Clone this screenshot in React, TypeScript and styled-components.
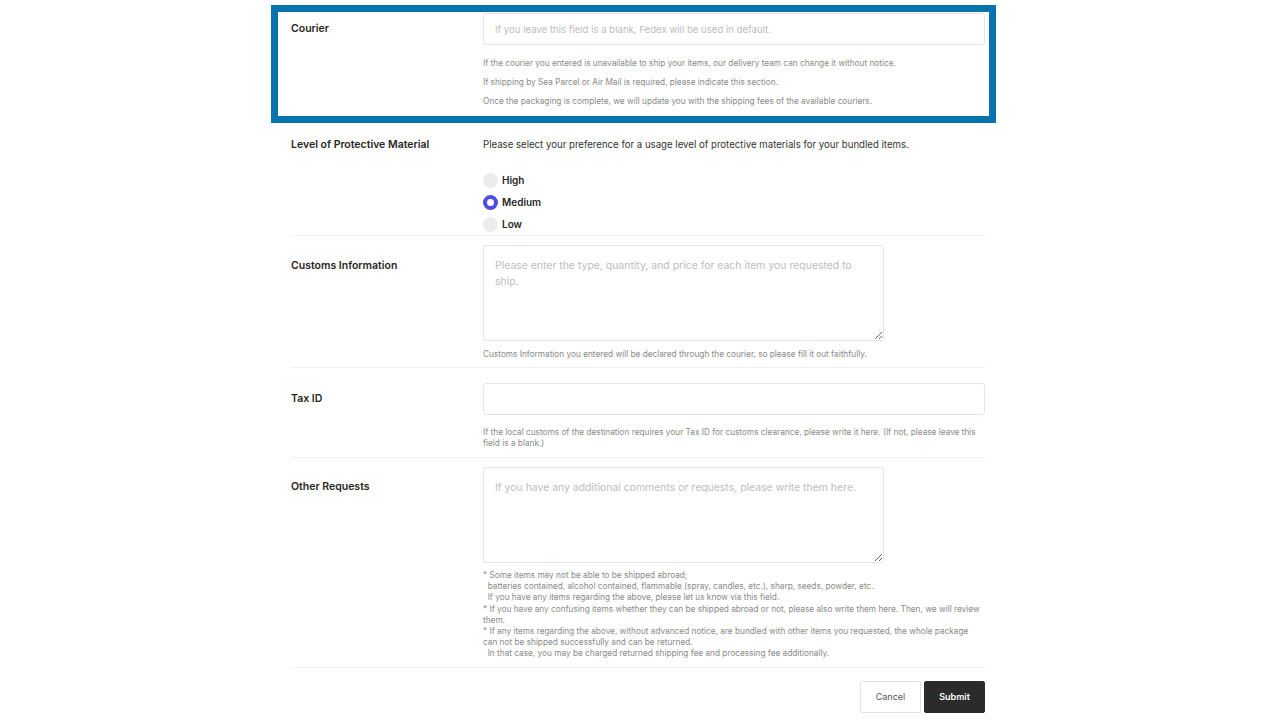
import React from "react";
import styled, { createGlobalStyle } from "styled-components";

const GlobalStyle = createGlobalStyle`
  html, body {
    margin: 0;
    padding: 0;
    background: #ffffff;
  }
  body {
    font-family: Inter, "Noto Sans", "Liberation Sans", sans-serif;
    color: #222;
  }
  * { box-sizing: border-box; }
`;

const Page = styled.div`
  display: flex;
  justify-content: center;
  padding: 3px 4px 0 0;
`;

const Form = styled.form`
  width: 694px;
  display: flex;
  flex-direction: column;
`;

const Row = styled.div<{ $pt: number; $pb: number }>`
  position: relative;
  display: grid;
  grid-template-columns: 192px 502px;
  padding: ${(p) => p.$pt}px 0 ${(p) => p.$pb}px;
  border-bottom: 1px solid #f1f1f1;
`;

const Highlight = styled.div`
  position: absolute;
  left: -20px;
  right: -11px;
  top: 2px;
  bottom: -6px;
  border: 7px solid #0675ad;
  pointer-events: none;
`;

const Label = styled.div<{ $mt: number }>`
  margin-top: ${(p) => p.$mt}px;
  font-size: 10.5px;
  line-height: 14px;
  font-weight: 600;
  color: #262626;
`;

const Field = styled.div`
  display: flex;
  flex-direction: column;
`;

const TextInput = styled.input`
  width: 502px;
  height: 32px;
  border: 1px solid #e4e4e4;
  border-radius: 3px;
  padding: 0 11px;
  font-family: inherit;
  font-size: 9.6px;
  color: #333;
  outline: none;
  &::placeholder {
    color: #bdbdbd;
  }
`;

const TextArea = styled.textarea`
  width: 401px;
  height: 96px;
  border: 1px solid #e4e4e4;
  border-radius: 3px;
  padding: 12px 11px;
  font-family: inherit;
  font-size: 10.45px;
  line-height: 16px;
  color: #333;
  outline: none;
  resize: vertical;
  &::placeholder {
    color: #bdbdbd;
  }
`;

const HelpList = styled.div`
  margin-top: 9px;
  display: flex;
  flex-direction: column;
`;

const HelpLine = styled.p`
  margin: 0;
  font-size: 8.25px;
  line-height: 19px;
  color: #8a8a8a;
`;

const Help = styled.p<{ $mt: number; $lh?: number }>`
  margin: ${(p) => p.$mt}px 0 0;
  max-width: 498px;
  font-size: 8.25px;
  line-height: ${(p) => p.$lh ?? 11}px;
  color: #8a8a8a;
  white-space: pre-wrap;
`;

const Description = styled.p`
  margin: 0;
  font-size: 9.65px;
  line-height: 14px;
  color: #333;
`;

const RadioGroup = styled.div`
  margin-top: 17px;
  display: flex;
  flex-direction: column;
`;

const RadioRow = styled.label`
  display: flex;
  align-items: center;
  gap: 4px;
  height: 22px;
  font-size: 10px;
  font-weight: 600;
  color: #262626;
`;

const RadioDot = styled.input`
  appearance: none;
  margin: 0;
  width: 15px;
  height: 15px;
  border-radius: 50%;
  background: #ececec;
  &:checked {
    background: #ffffff;
    border: 4px solid #4b4fe6;
  }
`;

const Actions = styled.div`
  display: flex;
  justify-content: flex-end;
  gap: 3px;
  margin-top: 13px;
`;

const Button = styled.button<{ $primary?: boolean }>`
  width: 61px;
  height: 32px;
  border-radius: 2px;
  font-family: inherit;
  font-size: 9px;
  font-weight: ${(p) => (p.$primary ? 600 : 400)};
  border: 1px solid ${(p) => (p.$primary ? "#2b2b2b" : "#e2e2e2")};
  background: ${(p) => (p.$primary ? "#2b2b2b" : "#ffffff")};
  color: ${(p) => (p.$primary ? "#ffffff" : "#555")};
  cursor: pointer;
`;

const notes = `* Some items may not be able to be shipped abroad;
  batteries contained, alcohol contained, flammable (spray, candles, etc.), sharp, seeds, powder, etc.
  If you have any items regarding the above, please let us know via this field.
* If you have any confusing items whether they can be shipped abroad or not, please also write them here. Then, we will review them.
* If any items regarding the above, without advanced notice, are bundled with other items you requested, the whole package can not be shipped successfully and can be returned.
  In that case, you may be charged returned shipping fee and processing fee additionally.`;

export default function App() {
  return (
    <>
      <GlobalStyle />
      <Page>
        <Form onSubmit={(e) => e.preventDefault()}>
          <Row $pt={10} $pb={6}>
            <Label $mt={9}>Courier</Label>
            <Field>
              <TextInput placeholder="If you leave this field is a blank, Fedex will be used in default." />
              <HelpList>
                <HelpLine>
                  If the courier you entered is unavailable to ship your items, our delivery team can change it without notice.
                </HelpLine>
                <HelpLine>If shipping by Sea Parcel or Air Mail is required, please indicate this section.</HelpLine>
                <HelpLine>
                  Once the packaging is complete, we will update you with the shipping fees of the available couriers.
                </HelpLine>
              </HelpList>
            </Field>
            <Highlight />
          </Row>

          <Row $pt={20} $pb={0}>
            <Label $mt={0}>Level of Protective Material</Label>
            <Field>
              <Description>
                Please select your preference for a usage level of protective materials for your bundled items.
              </Description>
              <RadioGroup>
                <RadioRow>
                  <RadioDot type="radio" name="level" value="high" />
                  High
                </RadioRow>
                <RadioRow>
                  <RadioDot type="radio" name="level" value="medium" defaultChecked />
                  Medium
                </RadioRow>
                <RadioRow>
                  <RadioDot type="radio" name="level" value="low" />
                  Low
                </RadioRow>
              </RadioGroup>
            </Field>
          </Row>

          <Row $pt={9} $pb={7}>
            <Label $mt={14}>Customs Information</Label>
            <Field>
              <TextArea placeholder="Please enter the type, quantity, and price for each item you requested to ship." />
              <Help $mt={8}>
                Customs Information you entered will be declared through the courier, so please fill it out faithfully.
              </Help>
            </Field>
          </Row>

          <Row $pt={15} $pb={8}>
            <Label $mt={9}>Tax ID</Label>
            <Field>
              <TextInput />
              <Help $mt={12}>
                If the local customs of the destination requires your Tax ID for customs clearance, please write it here. (If not, please leave this field is a blank.)
              </Help>
            </Field>
          </Row>

          <Row $pt={9} $pb={7}>
            <Label $mt={13}>Other Requests</Label>
            <Field>
              <TextArea placeholder="If you have any additional comments or requests, please write them here." />
              <Help $mt={7} $lh={11.2}>
                {notes}
              </Help>
            </Field>
          </Row>

          <Actions>
            <Button type="button">Cancel</Button>
            <Button type="submit" $primary>
              Submit
            </Button>
          </Actions>
        </Form>
      </Page>
    </>
  );
}
